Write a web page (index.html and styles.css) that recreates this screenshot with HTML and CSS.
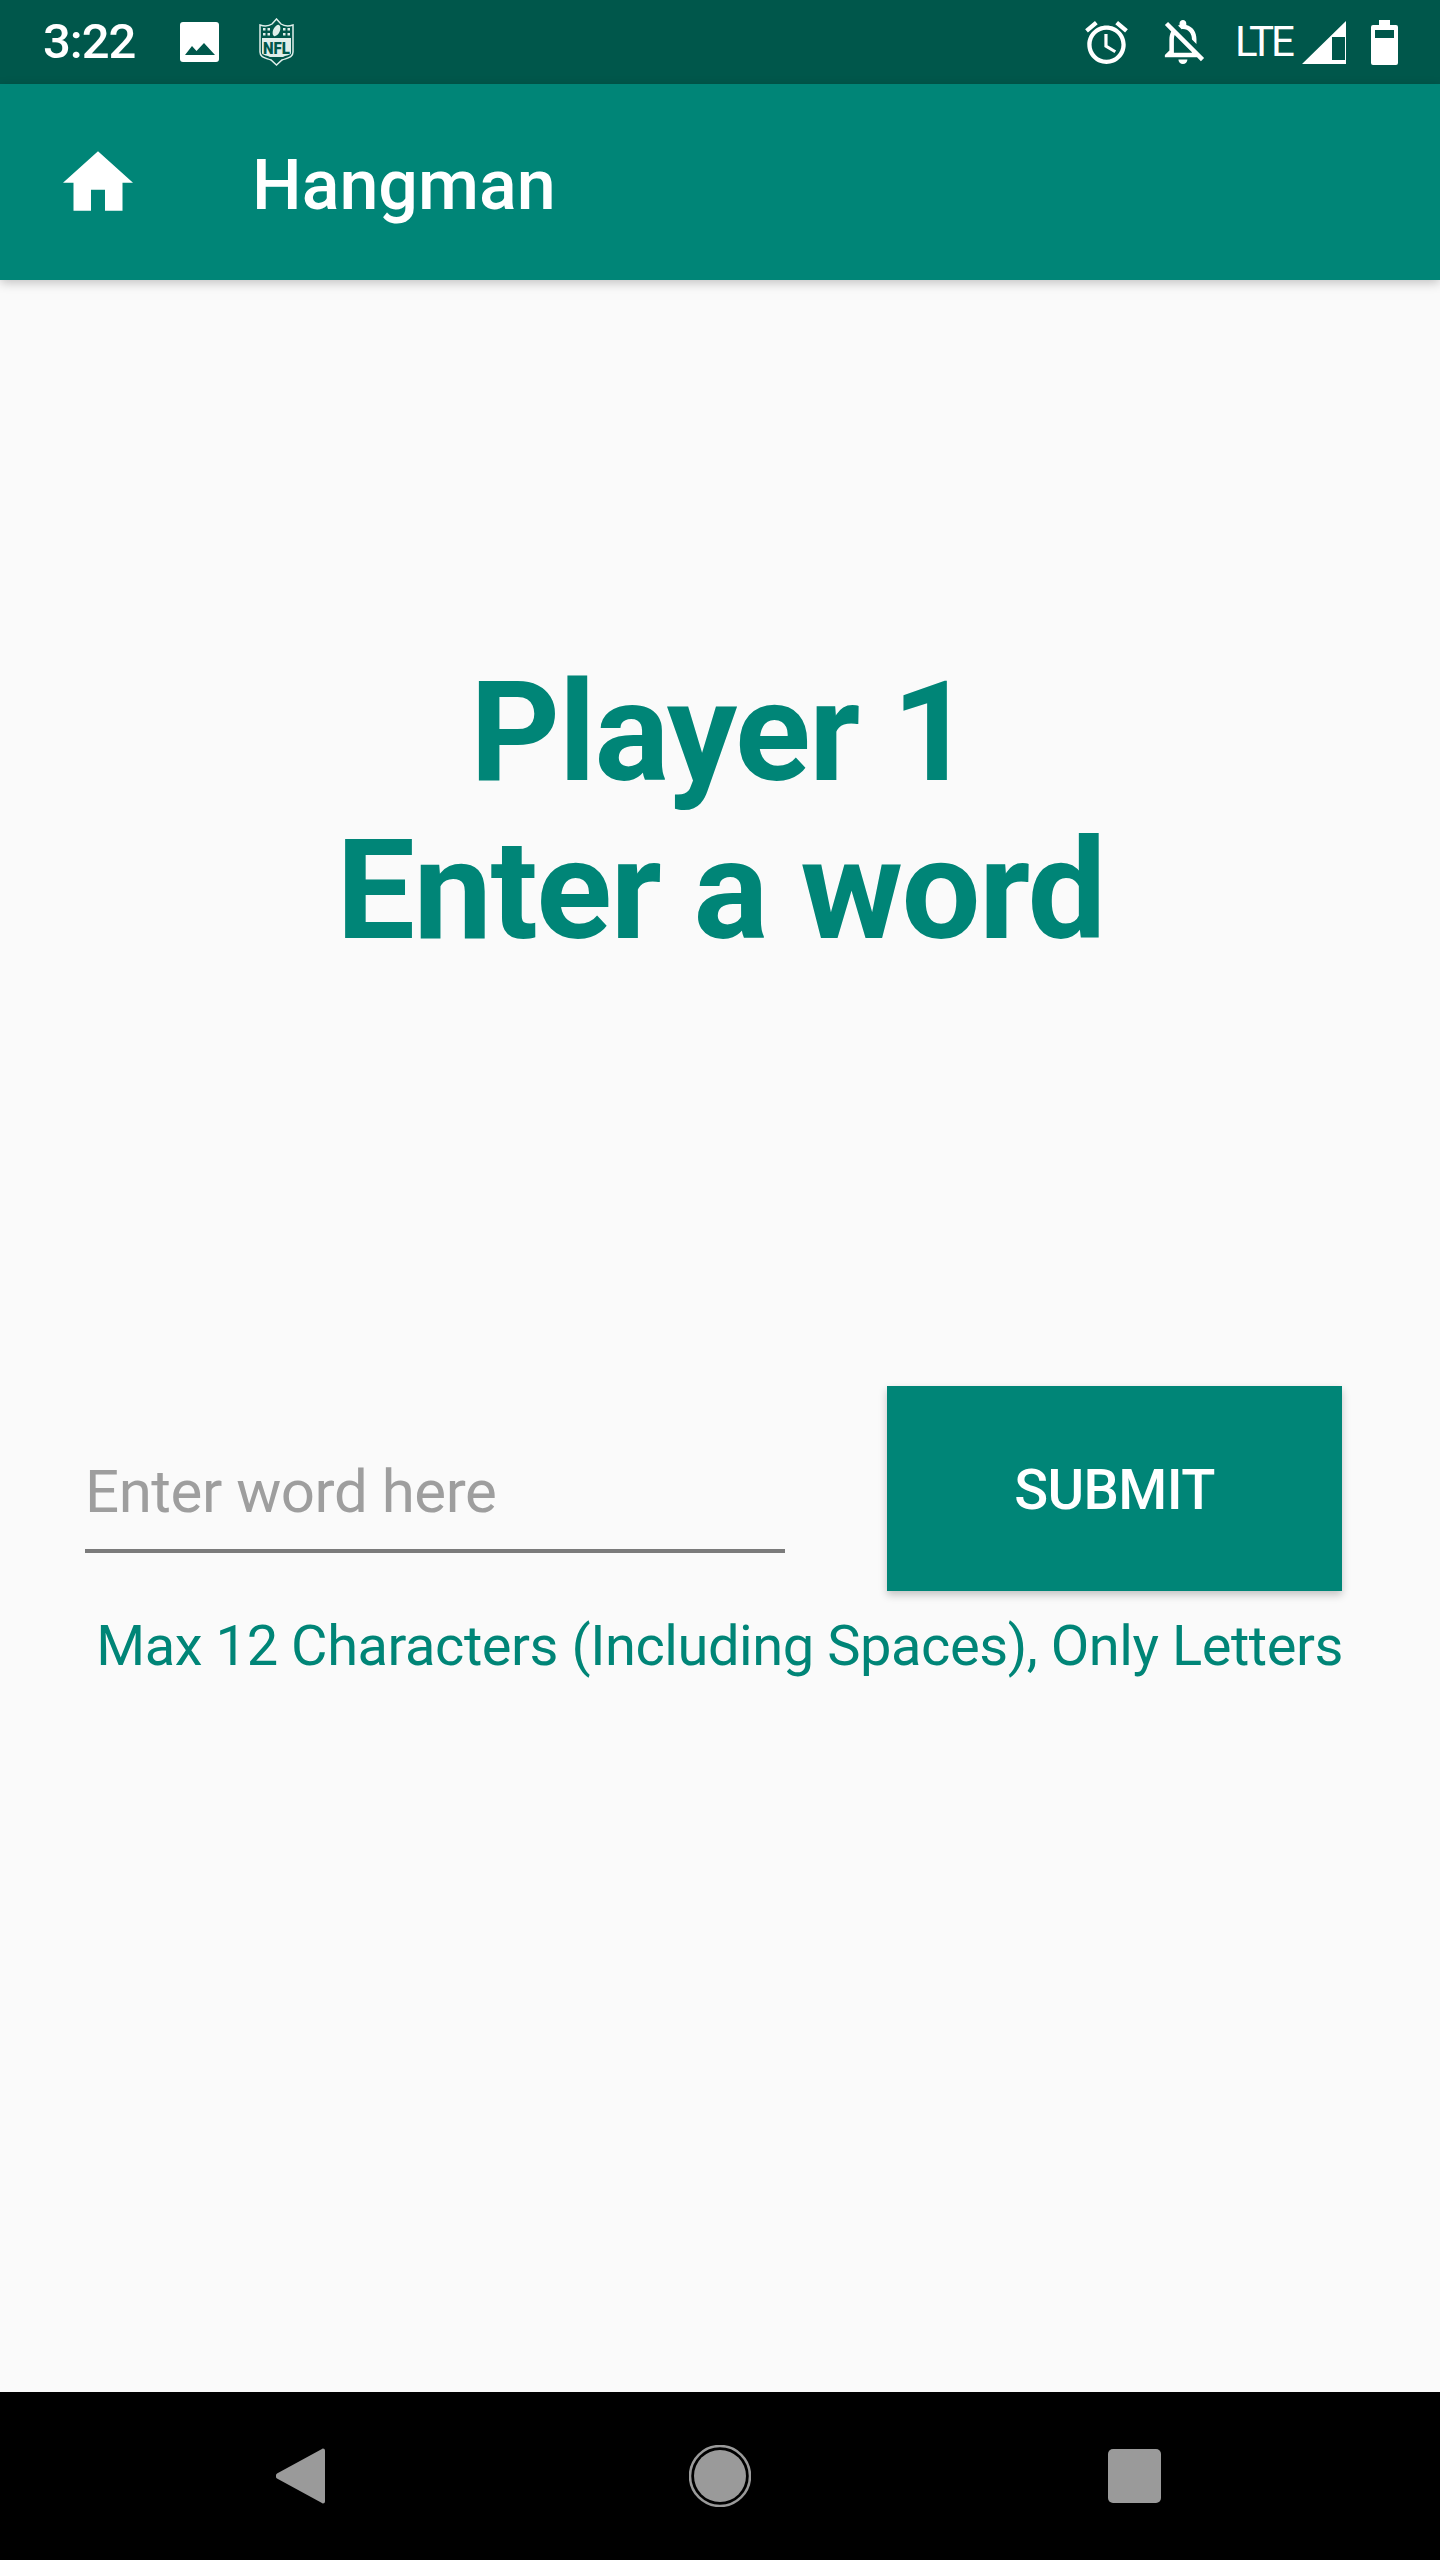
FILE: index.html
```html
<!DOCTYPE html>
<html lang="en">
<head>
<meta charset="utf-8">
<title>Hangman</title>
<link rel="stylesheet" href="styles.css">
</head>
<body>
<div class="phone">
  <div class="status">
    <span class="time">3:22</span>
    <svg class="ic-image" viewBox="0 0 39 40"><rect width="39" height="40" rx="3" fill="#fff"/><path fill="#00574b" d="M5 33L12 24l4.500 5L24 21l11 12z"/></svg>
    <svg class="ic-nfl" viewBox="0 0 35 48">
      <path d="M17.500 1l4.500 5c3 2 7 2.500 12 1v27c0 6-6 6-11 8l-5.500 5-5.500-5c-5-2-11-2-11-8V7c5 1.500 9 1 12-1z" fill="#00574b" stroke="#dfeeea" stroke-width="1.500"/>
      <ellipse cx="17.500" cy="12.500" rx="3.300" ry="6" fill="#dfeeea" transform="rotate(25 17.500 12.500)"/>
      <g fill="#dfeeea"><rect x="4" y="10" width="2.500" height="2.500"/><rect x="8.500" y="10" width="2.500" height="2.500"/><rect x="24" y="10" width="2.500" height="2.500"/><rect x="28.500" y="10" width="2.500" height="2.500"/><rect x="4" y="15" width="2.500" height="2.500"/><rect x="8.500" y="15" width="2.500" height="2.500"/><rect x="24" y="15" width="2.500" height="2.500"/><rect x="28.500" y="15" width="2.500" height="2.500"/></g>
      <path d="M3 20h29v15c0 2-4 2-8 4H11c-4-2-8-2-8-4z" fill="#dfeeea"/>
      <text x="17.500" y="36" class="nfl-text" textLength="27" lengthAdjust="spacingAndGlyphs">NFL</text>
    </svg>
    <span class="status-gap"></span>
    <svg class="ic-alarm" viewBox="2 1.860 20 20.140"><path fill="#fff" d="M22 5.720l-4.600-3.860-1.290 1.530 4.600 3.860L22 5.720zM7.880 3.390L6.600 1.860 2 5.710l1.290 1.530 4.590-3.850zM12.500 8H11v6l4.750 2.850.75-1.230-4-2.370V8zM12 4c-4.970 0-9 4.030-9 9s4.030 9 9 9 9-4.030 9-9-4.030-9-9-9zm0 16c-3.870 0-7-3.130-7-7s3.130-7 7-7 7 3.130 7 7-3.130 7-7 7z"/></svg>
    <svg class="ic-bell" viewBox="4 2.500 17.400 19.500"><path fill="#fff" d="M12 22c1.100 0 2-.9 2-2h-4c0 1.100.9 2 2 2zm0-15.500c2.490 0 4 2.020 4 4.500v.1l2 2V11c0-3.080-1.640-5.640-4.500-6.320V4c0-.83-.67-1.500-1.500-1.500s-1.500.67-1.500 1.500v.68c-.24.06-.47.15-.69.230l1.640 1.640c.18-.02.36-.05.55-.05zM5.410 3.350L4 4.760l2.810 2.810C6.290 8.570 6 9.740 6 11v5l-2 2v1h14.240l1.740 1.740 1.410-1.410L5.410 3.350zM16 17H8v-6c0-.68.12-1.320.34-1.900L16 16.760V17z"/></svg>
    <span class="lte">LTE</span>
    <svg class="ic-signal" viewBox="0 0 44 43"><path fill-rule="evenodd" fill="#fff" d="M44 0v43H0zM43 16H30v23h13z"/></svg>
    <svg class="ic-battery" viewBox="0 0 27 45"><path fill-rule="evenodd" fill="#fff" d="M8 0h11v5h6a2 2 0 0 1 2 2v36a2 2 0 0 1-2 2H2a2 2 0 0 1-2-2V7a2 2 0 0 1 2-2h6zM4 10v8h19v-8z"/></svg>
  </div>
  <header class="appbar">
    <svg class="ic-home" viewBox="2 3 20 17"><path fill="#fff" d="M10 20v-6h4v6h5v-8h3L12 3 2 12h3v8z"/></svg>
    <h1 class="title">Hangman</h1>
  </header>
  <main class="content">
    <h2 class="heading">Player 1<br>Enter a word</h2>
    <div class="form-row">
      <div class="field"><span class="placeholder">Enter word here</span></div>
      <button class="submit" type="button">SUBMIT</button>
    </div>
    <p class="hint">Max 12 Characters (Including Spaces), Only Letters</p>
  </main>
  <nav class="navbar">
    <svg class="nav-back" viewBox="0 0 49 56"><path fill="#9a9a9a" d="M47 0.500a2 2 0 0 1 2 2v51a2 2 0 0 1-2 2 2 2 0 0 1-1.500-.7L1 30.500a3.500 3.500 0 0 1 0-5L45.500 1.200A2 2 0 0 1 47 .5z"/></svg>
    <svg class="nav-home" viewBox="0 0 62 62"><circle cx="31" cy="31" r="30" fill="none" stroke="#9a9a9a" stroke-width="2.500"/><circle cx="31" cy="31" r="26" fill="#9a9a9a"/></svg>
    <span class="nav-recent"></span>
  </nav>
</div>
</body>
</html>
```

FILE: styles.css
```css
* { box-sizing: border-box; }
html, body { margin: 0; padding: 0; }
body { font-family: Roboto, "Liberation Sans", sans-serif; background: #fafafa; }

.phone { width: 1440px; height: 2560px; display: flex; flex-direction: column; overflow: hidden; }

.status { height: 84px; background: #00574b; display: flex; align-items: center; color: #fff; padding: 0 42px 0 43px; flex: none; }
.time { font-size: 49px; font-weight: 500; line-height: 84px; width: 137px; letter-spacing: -1px; }
.ic-image { width: 39px; height: 40px; margin-right: 40px; }
.ic-nfl { width: 35px; height: 48px; }
.nfl-text { font-family: Roboto, sans-serif; font-weight: 900; font-size: 17px; fill: #00574b; text-anchor: middle; }
.status-gap { flex: 1; }
.ic-alarm { width: 43px; height: 43px; margin-right: 35px; }
.ic-bell { width: 43px; height: 44px; margin-right: 29px; }
.lte { font-size: 42px; line-height: 84px; width: 56px; margin-right: 11px; letter-spacing: -3px; }
.ic-signal { width: 44px; height: 43px; margin-right: 25px; }
.ic-battery { width: 27px; height: 45px; }

.appbar { height: 196px; background: #008577; display: flex; align-items: center; flex: none; padding-left: 63px; box-shadow: 0 3px 10px rgba(0,0,0,.22); position: relative; }
.ic-home { width: 70px; height: 60px; margin-right: 119px; margin-bottom: 3px; }
.title { margin: 6px 0 0; font-size: 70px; font-weight: 500; color: #fff; }

.content { flex: 1; display: flex; flex-direction: column; padding: 373px 98px 0 85px; }
.heading { margin: 0 0 417px; padding-left: 14px; text-align: center; font-size: 140px; font-weight: 700; line-height: 158px; color: #008577; letter-spacing: -1.500px; }
.form-row { display: flex; justify-content: space-between; align-items: flex-start; }
.field { width: 700px; height: 167px; border-bottom: 4px solid #7b7b7b; display: flex; align-items: flex-end; padding: 0 0 20px 0; }
.placeholder { font-size: 60px; line-height: 74px; color: #9e9e9e; letter-spacing: -.45px; white-space: nowrap; }
.submit { width: 455px; height: 205px; border: 0; border-radius: 0; padding: 2px 0 0; background: #008577; color: #fff; font-family: inherit; font-size: 56px; font-weight: 500; letter-spacing: -.6px; box-shadow: 0 4px 8px rgba(0,0,0,.22); }
.hint { margin: 22px -1px 0 0; text-align: right; font-size: 56px; line-height: 66px; color: #008577; letter-spacing: -.44px; white-space: nowrap; }

.navbar { height: 168px; background: #000; flex: none; display: flex; align-items: center; padding-left: 276px; }
.nav-back { width: 49px; height: 56px; margin-right: 364px; }
.nav-home { width: 62px; height: 62px; margin-right: 357px; }
.nav-recent { width: 53px; height: 54px; border-radius: 5px; background: #9a9a9a; }
```
